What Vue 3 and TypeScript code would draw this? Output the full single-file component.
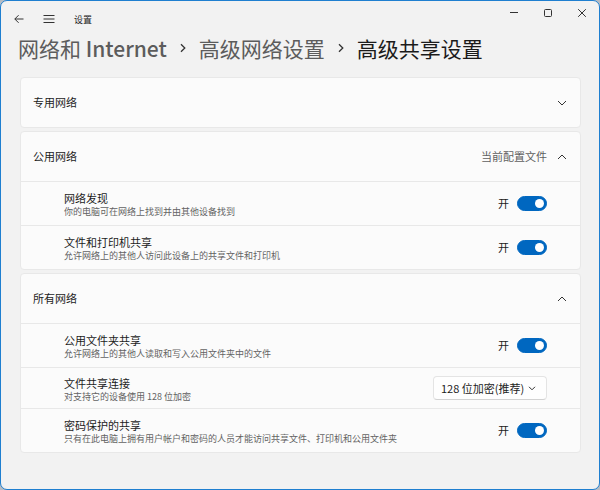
<script setup lang="ts">
import { reactive } from 'vue'

interface Row {
  id: string
  title: string
  note: string
  on?: boolean
  options?: string[]
  value?: string
}

interface Group {
  id: string
  title: string
  badge?: string
  open: boolean
  rows: Row[]
}

const groups = reactive<Group[]>([
  { id: 'private', title: '专用网络', open: false, rows: [] },
  {
    id: 'public',
    title: '公用网络',
    badge: '当前配置文件',
    open: true,
    rows: [
      { id: 'discovery', title: '网络发现', note: '你的电脑可在网络上找到并由其他设备找到', on: true },
      { id: 'printers', title: '文件和打印机共享', note: '允许网络上的其他人访问此设备上的共享文件和打印机', on: true },
    ],
  },
  {
    id: 'all',
    title: '所有网络',
    open: true,
    rows: [
      { id: 'folders', title: '公用文件夹共享', note: '允许网络上的其他人读取和写入公用文件夹中的文件', on: true },
      {
        id: 'encryption',
        title: '文件共享连接',
        note: '对支持它的设备使用 128 位加密',
        options: ['128 位加密(推荐)'],
        value: '128 位加密(推荐)',
      },
      { id: 'password', title: '密码保护的共享', note: '只有在此电脑上拥有用户帐户和密码的人员才能访问共享文件、打印机和公用文件夹', on: true },
    ],
  },
])
</script>

<template>
  <div class="window" lang="zh-CN">
    <header class="titlebar">
      <div class="nav">
        <button type="button" class="icon-button" aria-label="返回">
          <svg width="10" height="10" viewBox="0 0 10 10"><path d="M9.5 5H.8M4.6 1.2.8 5l3.8 3.8" /></svg>
        </button>
        <button type="button" class="icon-button" aria-label="菜单">
          <svg width="12" height="10" viewBox="0 0 12 10"><path d="M.5 1.5h11M.5 5h11M.5 8.5h11" /></svg>
        </button>
        <span class="app-name">设置</span>
      </div>
      <div class="controls">
        <button type="button" class="icon-button" aria-label="最小化">
          <svg width="10" height="10" viewBox="0 0 10 10"><path d="M1 4.5h8" /></svg>
        </button>
        <button type="button" class="icon-button" aria-label="最大化">
          <svg width="10" height="10" viewBox="0 0 10 10"><rect x="1.5" y="1.5" width="7" height="7" rx="1" /></svg>
        </button>
        <button type="button" class="icon-button" aria-label="关闭">
          <svg width="10" height="10" viewBox="0 0 10 10"><path d="m1.2 1.2 7.6 7.6M8.8 1.2 1.2 8.8" /></svg>
        </button>
      </div>
    </header>

    <nav class="crumbs">
      <a href="#network">网络和 <b>Internet</b></a>
      <svg width="6" height="10" viewBox="0 0 6 10"><path d="m1 1.2 3.8 3.8L1 8.8" /></svg>
      <a href="#advanced">高级网络设置</a>
      <svg width="6" height="10" viewBox="0 0 6 10"><path d="m1 1.2 3.8 3.8L1 8.8" /></svg>
      <h1>高级共享设置</h1>
    </nav>

    <main class="groups">
      <section v-for="group in groups" :key="group.id" class="card">
        <button type="button" class="card-head" :aria-expanded="group.open" @click="group.open = !group.open">
          <span class="title">{{ group.title }}</span>
          <span v-if="group.badge" class="badge">{{ group.badge }}</span>
          <svg class="chevron" :class="{ up: group.open }" width="10" height="6" viewBox="0 0 10 6">
            <path d="m1 1 4 4 4-4" />
          </svg>
        </button>
        <template v-if="group.open">
          <div v-for="row in group.rows" :key="row.id" class="row" :class="{ compact: row.options }">
            <label class="text" :for="row.id">
              <span class="title">{{ row.title }}</span>
              <span class="note">{{ row.note }}</span>
            </label>
            <div v-if="row.options" class="picker">
              <select :id="row.id" v-model="row.value">
                <option v-for="option in row.options" :key="option">{{ option }}</option>
              </select>
              <svg width="8" height="5" viewBox="0 0 8 5"><path d="m1 .8 3 3 3-3" /></svg>
            </div>
            <div v-else class="switch">
              <span>{{ row.on ? '开' : '关' }}</span>
              <input :id="row.id" v-model="row.on" type="checkbox" role="switch" />
            </div>
          </div>
        </template>
      </section>
    </main>
  </div>
</template>

<style>
body {
  background: #b5bcc4;
}
</style>

<style scoped>
.window {
  box-sizing: border-box;
  min-height: 100vh;
  border: 1px solid #1f7fd0;
  border-radius: 7px;
  background: #f2f2f2;
  color: #1b1b1b;
  font-family: "Noto Sans CJK SC", sans-serif;
  font-size: 11px;
  line-height: 15px;
}
button,
select {
  font: inherit;
  color: inherit;
}
svg {
  flex: none;
  fill: none;
  stroke: #333;
  stroke-width: 1;
}
.titlebar {
  display: flex;
  justify-content: space-between;
  height: 36px;
  padding: 0 7px 0 8px;
}
.nav,
.controls {
  display: flex;
  align-items: center;
}
.nav {
  gap: 10px;
}
.controls {
  height: 24px;
  gap: 14px;
}
.icon-button {
  display: grid;
  place-items: center;
  width: 20px;
  height: 20px;
  padding: 0;
  border: 0;
  background: none;
}
.app-name {
  margin-left: 5px;
  font-size: 9px;
}
.crumbs {
  display: flex;
  align-items: center;
  gap: 13px;
  height: 22px;
  padding: 0 17px;
  font-size: 21px;
  line-height: 22px;
  white-space: nowrap;
}
.crumbs a {
  color: #5c5c5c;
  text-decoration: none;
}
.crumbs b {
  font-weight: 500;
}
.crumbs svg {
  stroke-width: 1.3;
}
.crumbs h1 {
  margin: 0;
  font-size: 21px;
  font-weight: 400;
}
.groups {
  display: flex;
  flex-direction: column;
  gap: 3px;
  padding: 18px 18px 24px 19px;
}
.card {
  border: 1px solid #e8e8e8;
  border-radius: 4px;
  background: #fbfbfb;
}
.card-head {
  display: flex;
  align-items: center;
  width: 100%;
  height: 49px;
  gap: 10px;
  padding: 0 13px 0 12px;
  border: 0;
  background: none;
  text-align: left;
}
.card-head .title {
  flex: 1;
}
.badge {
  color: #5f5f5f;
}
.chevron.up {
  transform: rotate(180deg);
}
.row {
  display: flex;
  align-items: center;
  justify-content: space-between;
  box-sizing: border-box;
  min-height: 44px;
  padding: 0 33px 0 43px;
  border-top: 1px solid #e8e8e8;
}
.row.compact {
  min-height: 41px;
}
.text {
  display: flex;
  flex-direction: column;
  padding-top: 2px;
}
.text .title {
  line-height: 14px;
}
.note {
  color: #636363;
  font-size: 9px;
  line-height: 13px;
}
.switch {
  display: flex;
  align-items: center;
  gap: 8px;
}
.switch input {
  appearance: none;
  display: flex;
  align-items: center;
  box-sizing: border-box;
  width: 30px;
  height: 15px;
  margin: 0;
  padding: 0 3px;
  border: 1px solid #777;
  border-radius: 8px;
}
.switch input::before {
  width: 9px;
  height: 9px;
  border-radius: 50%;
  background: #666;
  content: "";
}
.switch input:checked {
  justify-content: flex-end;
  padding: 0 2px;
  border-color: #0067c0;
  background: #0067c0;
}
.switch input:checked::before {
  background: #fff;
}
.picker {
  display: grid;
  align-items: center;
}
.picker select,
.picker svg {
  grid-area: 1 / 1;
}
.picker select {
  appearance: none;
  width: 114px;
  height: 24px;
  padding: 0 20px 0 7px;
  border: 1px solid #e4e4e4;
  border-bottom-color: #d2d2d2;
  border-radius: 4px;
  background: #fefefe;
}
.picker svg {
  justify-self: end;
  margin-right: 11px;
  pointer-events: none;
}
</style>
